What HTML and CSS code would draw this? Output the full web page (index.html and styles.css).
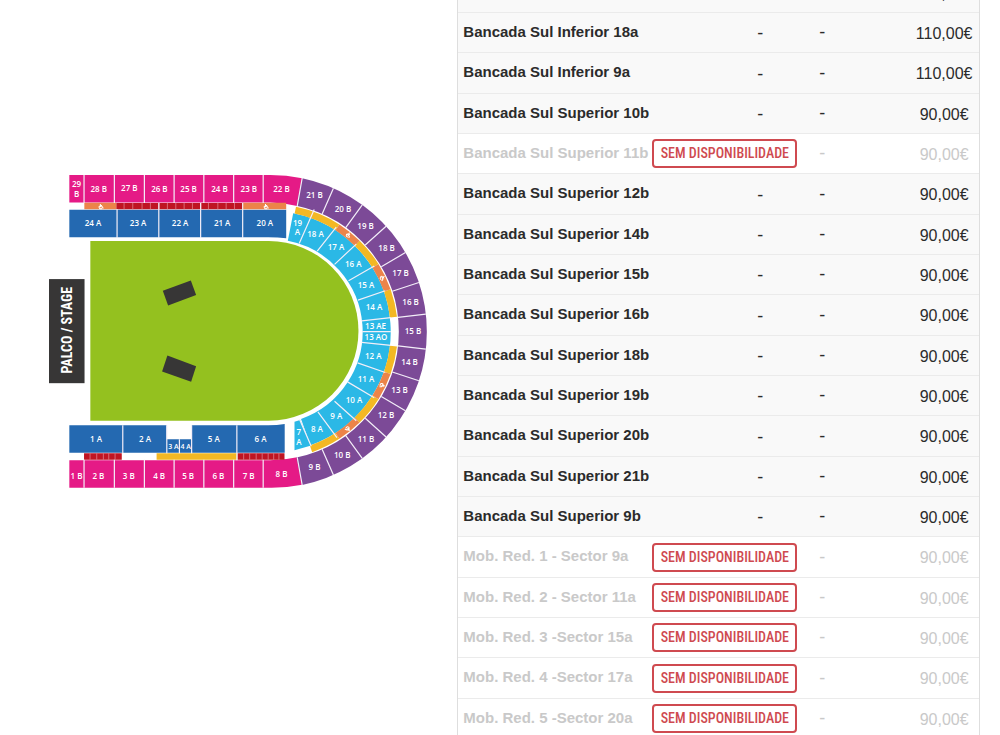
FILE: index.html
```html
<!DOCTYPE html>
<html lang="pt">
<head>
    <meta charset="UTF-8">
    <meta name="viewport" content="width=device-width, initial-scale=1.0">
    <title>Bilhetes</title>
    <link rel="stylesheet" href="styles.css">
</head>
<body>
    <div class="page">
        <div class="map-container">
            <svg class="map" viewBox="40 165 400 330" role="img" aria-label="Planta da sala">
                <!-- Stage and floor -->
                <rect class="dark" x="49" y="279" width="35.5" height="104"/>
                <path class="floor" d="M90.3 241H268.500A89.700 89.700 0 0 1 268.500 420.500H90.300Z"/>
                <path class="dark" d="M162.700 290.700L190.700 280.300L196 295L168 305.500Z"/>
                <path class="dark" d="M167.300 355.300L196 366L191 381.700L162 371.300Z"/>
                <text class="stage" transform="translate(72 330) rotate(-90)">PALCO / STAGE</text>

                <!-- B stands, straight part -->
                <path class="pink" d="M69.300 175H270A156.500 156.500 0 0 1 302 178.300L297 206A128.500 128.500 0 0 0 270 202.500H69.300Z"/>
                <path class="pink" d="M69.300 487.500H270A156.500 156.500 0 0 0 302 484.500L297 457A128.500 128.500 0 0 1 270 460H69.300Z"/>

                <!-- A stands, straight part -->
                <path class="blue" d="M69.300 209.700H286V238.300Q278 237.300 268 237.300H69.300Z"/>
                <path class="blue" d="M69.300 425H166.500V439H191.700V425H268Q277 425 284.500 423.700V452.500H69.300Z"/>

                <!-- Strips between A and B -->
                <path class="orange" d="M84.300 202.700H116.300V209.300H84.300ZM242.500 202.700H286V209.300H242.500Z"/>
                <path class="red" d="M116.300 202.900H242.500V209.300H116.300ZM84 453H121.700V459.500H84ZM237.300 453H284.300V459.500H237.300Z"/>
                <path class="yellow" d="M156.500 453H237V459.500H156.500Z"/>
                <path class="tick" d="M124 203v6.500M132.700 203v6.500M142 203v6.500M150.300 203v6.500M159 203v6.500M167.300 203v6.500M175.700 203v6.500M184 203v6.500M192.300 203v6.500M200.700 203v6.500M208.300 203v6.500M217.700 203v6.500M226 203v6.500M234.300 203v6.500"/>
                <path class="tick" d="M90 453v6.500M96.700 453v6.500M103.300 453v6.500M108.700 453v6.500M115 453v6.500M243.500 453v6.500M249.500 453v6.500M256 453v6.500M262 453v6.500M268 453v6.500M273.500 453v6.500M278.700 453v6.500"/>

                <!-- Curve: B ring, A ring, strip ring -->
                <path class="ring-b" d="M299.100 192A142.500 142.500 0 0 1 299.100 471"/>
                <path class="ring-a" d="M290.300 227A106.500 106.500 0 0 1 305.500 431.900"/>
                <path class="cyan" d="M294.300 421.500L300 419.700L311 445.200L294.300 450Z"/>
                <path class="strip-yellow" d="M295.100 210.100A124 124 0 0 1 337.200 227.300M356.900 243.100A124 124 0 0 1 375.200 265.800M387 290.300A124 124 0 0 1 393.200 317M393.200 346A124 124 0 0 1 387 372.700M375.200 397.200A124 124 0 0 1 356.900 419.900M337.200 435.700A124 124 0 0 1 310.800 448.600"/>
                <path class="strip-orange" d="M337.200 227.300A124 124 0 0 1 356.900 243.100M375.200 265.800A124 124 0 0 1 387 290.300M387 372.700A124 124 0 0 1 375.200 397.200M356.900 419.900A124 124 0 0 1 337.200 435.700"/>

                <!-- Sector limits -->
                <path class="limit" d="M84 175v28M114.300 175v28M144.300 175v28M174 175v28M203.700 175v28M233.500 175v28M263 175v28M84 459.500v28M114.300 459.500v28M144.300 459.500v28M174 459.500v28M203.700 459.500v28M233.500 459.500v28M263 459.500v28"/>
                <path class="limit" d="M117 209v29M158.700 203v35M200.500 203v35M242.500 203v35M122.700 425v28M166.700 425v28M179.300 439v14M191.500 425v28M236.700 425v35"/>
                <path class="limit" d="M302 178L297 206M321.900 213.900L333.200 188.300M345.500 227.500L362 204.900M365 245L385.800 226.200M381 266.700L405.100 252.500M392 291.200L418.600 282.400M397.700 317.200L425.500 314"/>
                <path class="limit" d="M302 485L297 457M321.900 449.100L333.200 474.700M345.500 435.500L362 458.100M365 418L385.800 436.800M381 396.300L405.100 410.500M392 371.800L418.600 380.600M397.700 345.800L425.500 349"/>
                <path class="limit" d="M299 243.500L314 209.500M317 251L336 227M334.300 264.300L356 244M348.300 280.700L374 266M357.700 300L385 290.700M361.500 320.700L390.500 317.500M362 331.400H390.500M361.500 342.300L390.500 345.300M357.300 362.700L385 372.300M347.300 381.700L374 397.500M334.300 401L356 420.500M317.700 411.700L336.700 437.300M299.300 419L311 446"/>

                <!-- Wheelchair places -->
                <g class="chair">
                    <path id="chair" d="M-.7 -2.500V.3H1.300L2.200 2M-1.500 -.6A1.700 1.700 0 1 0 1 1.800M-.7 -1H1"/>
                    <use href="#chair" transform="translate(101 206.500)"/>
                    <use href="#chair" transform="translate(266 206.500)"/>
                    <use href="#chair" transform="translate(348.300 235) rotate(40)"/>
                    <use href="#chair" transform="translate(382.300 278) rotate(65)"/>
                    <use href="#chair" transform="translate(382 385.500) rotate(115)"/>
                    <use href="#chair" transform="translate(347.500 429) rotate(140)"/>
                </g>

                <g class="sector">
                    <text x="76.500" y="186.500">29</text><text x="76.500" y="196.500">B</text>
                    <text x="98.700" y="192">28 B</text>
                    <text x="129.300" y="191.300">27 B</text>
                    <text x="159.300" y="192">26 B</text>
                    <text x="188.500" y="192">25 B</text>
                    <text x="219.300" y="192.300">24 B</text>
                    <text x="248.700" y="192">23 B</text>
                    <text x="281.300" y="192">22 B</text>
                    <text x="314.300" y="198.300">21 B</text>
                    <text x="342.700" y="211.700">20 B</text>
                    <text x="365.300" y="229">19 B</text>
                    <text x="386.300" y="251.300">18 B</text>
                    <text x="400.300" y="276.300">17 B</text>
                    <text x="410.300" y="304.700">16 B</text>
                    <text x="412.700" y="334">15 B</text>
                    <text x="409.300" y="364.700">14 B</text>
                    <text x="399.300" y="392.500">13 B</text>
                    <text x="385.700" y="418.300">12 B</text>
                    <text x="365.700" y="441.300">11 B</text>
                    <text x="342" y="458">10 B</text>
                    <text x="314.300" y="470">9 B</text>
                    <text x="281.300" y="476.300">8 B</text>
                    <text x="248.500" y="478.300">7 B</text>
                    <text x="218.300" y="478.300">6 B</text>
                    <text x="188" y="479">5 B</text>
                    <text x="159" y="478.300">4 B</text>
                    <text x="128.700" y="478.300">3 B</text>
                    <text x="98.300" y="479">2 B</text>
                    <text x="76.500" y="479">1 B</text>
                    <text x="93" y="226.300">24 A</text>
                    <text x="138" y="226.300">23 A</text>
                    <text x="180" y="226.300">22 A</text>
                    <text x="222" y="226.300">21 A</text>
                    <text x="264.700" y="226.300">20 A</text>
                    <text x="297.300" y="225.500">19</text><text x="297.300" y="235">A</text>
                    <text x="315.300" y="237">18 A</text>
                    <text x="335.700" y="250.300">17 A</text>
                    <text x="353" y="267.300">16 A</text>
                    <text x="365.700" y="288">15 A</text>
                    <text x="373.700" y="310">14 A</text>
                    <text x="375.300" y="328.700">13 AE</text>
                    <text x="375.700" y="340.300">13 AO</text>
                    <text x="373" y="359">12 A</text>
                    <text x="365.700" y="382.300">11 A</text>
                    <text x="353.700" y="403">10 A</text>
                    <text x="336" y="419.300">9 A</text>
                    <text x="316.700" y="431.700">8 A</text>
                    <text x="298.700" y="435">7</text><text x="298.700" y="445">A</text>
                    <text x="260.300" y="442">6 A</text>
                    <text x="213.700" y="441.300">5 A</text>
                    <text x="145" y="441.300">2 A</text>
                    <text x="96" y="441.300">1 A</text>
                    <text class="small" x="173.300" y="448.500">3 A</text>
                    <text class="small" x="185.500" y="449">4 A</text>
                </g>
            </svg>
        </div>

        <div class="list-container">
            <table class="prices">
                <tbody>
                    <tr><th scope="row">Bancada Sul Inferior 17a</th><td class="status">-</td><td class="extra">-</td><td class="price">110,00€</td></tr>
                    <tr><th scope="row">Bancada Sul Inferior 18a</th><td class="status">-</td><td class="extra">-</td><td class="price">110,00€</td></tr>
                    <tr><th scope="row">Bancada Sul Inferior 9a</th><td class="status">-</td><td class="extra">-</td><td class="price">110,00€</td></tr>
                    <tr><th scope="row">Bancada Sul Superior 10b</th><td class="status">-</td><td class="extra">-</td><td class="price">90,00€</td></tr>
                    <tr class="sold-out"><th scope="row">Bancada Sul Superior 11b</th><td class="status"><span class="badge">SEM DISPONIBILIDADE</span></td><td class="extra">-</td><td class="price">90,00€</td></tr>
                    <tr><th scope="row">Bancada Sul Superior 12b</th><td class="status">-</td><td class="extra">-</td><td class="price">90,00€</td></tr>
                    <tr><th scope="row">Bancada Sul Superior 14b</th><td class="status">-</td><td class="extra">-</td><td class="price">90,00€</td></tr>
                    <tr><th scope="row">Bancada Sul Superior 15b</th><td class="status">-</td><td class="extra">-</td><td class="price">90,00€</td></tr>
                    <tr><th scope="row">Bancada Sul Superior 16b</th><td class="status">-</td><td class="extra">-</td><td class="price">90,00€</td></tr>
                    <tr><th scope="row">Bancada Sul Superior 18b</th><td class="status">-</td><td class="extra">-</td><td class="price">90,00€</td></tr>
                    <tr><th scope="row">Bancada Sul Superior 19b</th><td class="status">-</td><td class="extra">-</td><td class="price">90,00€</td></tr>
                    <tr><th scope="row">Bancada Sul Superior 20b</th><td class="status">-</td><td class="extra">-</td><td class="price">90,00€</td></tr>
                    <tr><th scope="row">Bancada Sul Superior 21b</th><td class="status">-</td><td class="extra">-</td><td class="price">90,00€</td></tr>
                    <tr><th scope="row">Bancada Sul Superior 9b</th><td class="status">-</td><td class="extra">-</td><td class="price">90,00€</td></tr>
                    <tr class="sold-out"><th scope="row">Mob. Red. 1 - Sector 9a</th><td class="status"><span class="badge">SEM DISPONIBILIDADE</span></td><td class="extra">-</td><td class="price">90,00€</td></tr>
                    <tr class="sold-out"><th scope="row">Mob. Red. 2 - Sector 11a</th><td class="status"><span class="badge">SEM DISPONIBILIDADE</span></td><td class="extra">-</td><td class="price">90,00€</td></tr>
                    <tr class="sold-out"><th scope="row">Mob. Red. 3 -Sector 15a</th><td class="status"><span class="badge">SEM DISPONIBILIDADE</span></td><td class="extra">-</td><td class="price">90,00€</td></tr>
                    <tr class="sold-out"><th scope="row">Mob. Red. 4 -Sector 17a</th><td class="status"><span class="badge">SEM DISPONIBILIDADE</span></td><td class="extra">-</td><td class="price">90,00€</td></tr>
                    <tr class="sold-out"><th scope="row">Mob. Red. 5 -Sector 20a</th><td class="status"><span class="badge">SEM DISPONIBILIDADE</span></td><td class="extra">-</td><td class="price">90,00€</td></tr>
                </tbody>
            </table>
        </div>
    </div>
</body>
</html>
```
FILE: styles.css
```css
body {
    margin: 0;
    background-color: #fff;
    font-family: "Liberation Sans", Arial, sans-serif;
    color: #2b2b2b;
}
.page {
    display: grid;
    grid-template-columns: minmax(0, 7fr) minmax(0, 8fr);
    height: 100vh;
    padding-right: 20px;
    overflow: hidden;
}
.map-container {
    padding: 165px 17px 0 40px;
}
.map {
    display: block;
    width: 100%;
}
.dark {
    fill: #373636;
}
.floor {
    fill: #94c11f;
}
.pink {
    fill: #e51a86;
}
.blue {
    fill: #2469b1;
}
.orange {
    fill: #ec8449;
}
.red {
    fill: #bf1522;
}
.yellow {
    fill: #f3b824;
}
.cyan {
    fill: #2bb8e6;
}
.ring-b,
.ring-a,
.strip-yellow,
.strip-orange,
.limit,
.tick,
.chair {
    fill: none;
}
.ring-b {
    stroke: #7c4a97;
    stroke-width: 28;
}
.ring-a {
    stroke: #2bb8e6;
    stroke-width: 28;
}
.strip-yellow {
    stroke: #f3b824;
    stroke-width: 7;
}
.strip-orange {
    stroke: #ec8449;
    stroke-width: 7;
}
.limit {
    stroke: #f3eef8;
    stroke-width: 1.2;
}
.tick {
    stroke: #e0808a;
    stroke-width: 0.8;
}
.chair {
    stroke: #fff;
    stroke-width: 1;
}
.sector {
    fill: #fff;
    font: 600 8px "Open Sans", "Noto Sans", sans-serif;
    text-anchor: middle;
}
.sector .small {
    font-size: 7px;
}
.stage {
    fill: #fff;
    font: bold 14px "Roboto Condensed", Roboto, sans-serif;
    text-anchor: middle;
}
.prices {
    width: 100%;
    margin-top: -27px;
    border-collapse: separate;
    border-spacing: 0;
    table-layout: fixed;
    border-left: 1px solid #dedede;
    border-right: 1px solid #dedede;
}
.prices tr {
    height: 40px;
    background-color: #f9f9f9;
}
.prices tr:nth-child(3n) {
    height: 41px;
}
.prices th,
.prices td {
    box-sizing: border-box;
    padding: 0;
    border-bottom: 1px solid #ebebeb;
    white-space: nowrap;
}
.prices th {
    width: 190px;
    padding: 0 0 3px 5px;
    font-size: 15px;
    text-align: left;
}
.prices .status {
    width: 153px;
    padding: 2px 38px 0 0;
    font-size: 18px;
    text-align: right;
}
.prices .extra {
    width: 42px;
    font-size: 18px;
    text-align: center;
}
.prices .price {
    padding: 2px 0 0 66px;
    font-size: 16px;
    text-align: center;
}
.prices .sold-out {
    background-color: #fff;
    color: #c9c9c9;
}
.prices .sold-out .status {
    padding: 0 4px;
    text-align: center;
}
.badge {
    display: block;
    border: 2px solid #cf4a50;
    border-radius: 4px;
    color: #cf4a50;
    font: 500 14px/25px "Roboto Condensed", Roboto, sans-serif;
}
```
